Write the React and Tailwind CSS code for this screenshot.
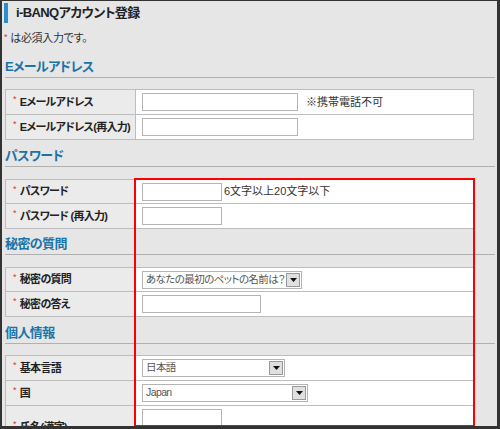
import React from 'react'

const font = "font-['Liberation_Sans','Noto_Sans_CJK_JP',sans-serif] [font-feature-settings:'palt']"

function Req() {
  return <span className="text-[#e03030] text-[9px] mr-[4px] relative -top-[2px] font-normal">*</span>
}

function Heading({ children, className }) {
  return (
    <div className={`border-b border-[#b0b0b0] leading-[16px] text-[13px] font-bold tracking-[-0.6px] text-[#1a74a8] ${className}`}>
      {children}
    </div>
  )
}

function Row({ label, className, children, top = 'items-center' }) {
  return (
    <div className={`flex ${className}`}>
      <div className="w-[130px] shrink-0 border-r border-[#bdbdbd] bg-[#ebebeb] flex items-center pl-[7px] text-[11px] font-bold tracking-[-0.7px] whitespace-nowrap overflow-hidden text-[#222]">
        <Req />{label}
      </div>
      <div className={`flex-1 bg-white flex ${top} pl-[6px] text-[11px] whitespace-nowrap text-[#333]`}>{children}</div>
    </div>
  )
}

function Input({ w }) {
  return <div className={`h-[18px] border border-[#b4b4b4] bg-white ${w}`} />
}

function Select({ w, value }) {
  return (
    <div className={`h-[18px] border border-[#b4b4b4] bg-white flex items-center justify-between pl-[3px] pr-[1px] text-[10.5px] tracking-[-0.6px] text-[#555] ${w}`}>
      <span className="whitespace-nowrap overflow-hidden">{value}</span>
      <div className="w-[14px] h-[14px] shrink-0 bg-[#e0e0e0] border border-[#9a9a9a] flex items-center justify-center">
        <svg width="7" height="4" viewBox="0 0 7 4"><path d="M0 0H7L3.5 4Z" fill="#111" /></svg>
      </div>
    </div>
  )
}

export default function App() {
  return (
    <div className={`relative w-[500px] h-[429px] overflow-hidden bg-[#e6e6e6] border-l-2 border-t border-r-[3px] border-b-[3px] border-[#333] ${font}`}>
      <div className="pl-[3px] pr-[2px]">
        <div className="mt-[2px] h-[20px] flex items-center">
          <div className="w-[4px] h-[20px] bg-[#2b8fce] -ml-[1px]" />
          <div className="ml-[8px] text-[13px] font-bold tracking-[-0.6px] text-[#222]">i-BANQアカウント登録</div>
        </div>
        <div className="mt-[8px] leading-[14px] text-[11px] tracking-[-0.3px] text-[#333] -ml-[1px]">
          <span className="text-[#e03030] text-[9px] relative -top-[2px] mr-[3px]">*</span>は必須入力です。
        </div>

        <Heading className="mt-[5px] h-[27px] pt-[8px]">Eメールアドレス</Heading>
        <div className="mt-[11px] w-[469px] border border-[#bdbdbd]">
          <Row label="Eメールアドレス" className="h-[24px]">
            <Input w="w-[156px]" />
            <span className="ml-[8px]">※携帯電話不可</span>
          </Row>
          <Row label="Eメールアドレス(再入力)" className="h-[25px] border-t border-[#bdbdbd]">
            <Input w="w-[156px]" />
          </Row>
        </div>

        <Heading className="h-[27px] pt-[8px]">パスワード</Heading>
        <div className="mt-[12px] w-[469px] border border-[#bdbdbd]">
          <Row label="パスワード" className="h-[23px]">
            <Input w="w-[80px]" />
            <span className="ml-[2px]">6文字以上20文字以下</span>
          </Row>
          <Row label="パスワード (再入力)" className="h-[25px] border-t border-[#bdbdbd]">
            <Input w="w-[80px]" />
          </Row>
        </div>

        <Heading className="h-[26px] pt-[7px]">秘密の質問</Heading>
        <div className="mt-[12px] w-[469px] border border-[#bdbdbd]">
          <Row label="秘密の質問" className="h-[23px]">
            <Select w="w-[160px]" value="あなたの最初のペットの名前は？" />
          </Row>
          <Row label="秘密の答え" className="h-[25px] border-t border-[#bdbdbd]">
            <Input w="w-[119px]" />
          </Row>
        </div>

        <Heading className="h-[27px] pt-[8px]">個人情報</Heading>
        <div className="mt-[11px] w-[469px] border border-[#bdbdbd]">
          <Row label="基本言語" className="h-[24px]">
            <Select w="w-[143px]" value="日本語" />
          </Row>
          <Row label="国" className="h-[25px] border-t border-[#bdbdbd]">
            <Select w="w-[166px]" value="Japan" />
          </Row>
          <Row label="氏名(漢字)" className="h-[43px] border-t border-[#bdbdbd]" top="items-start pt-[3px]">
            <Input w="w-[80px]" />
          </Row>
        </div>
      </div>

      <div className="absolute left-[132px] top-[177px] w-[341px] h-[249px] border-2 border-[#ff0000]" />
    </div>
  )
}
